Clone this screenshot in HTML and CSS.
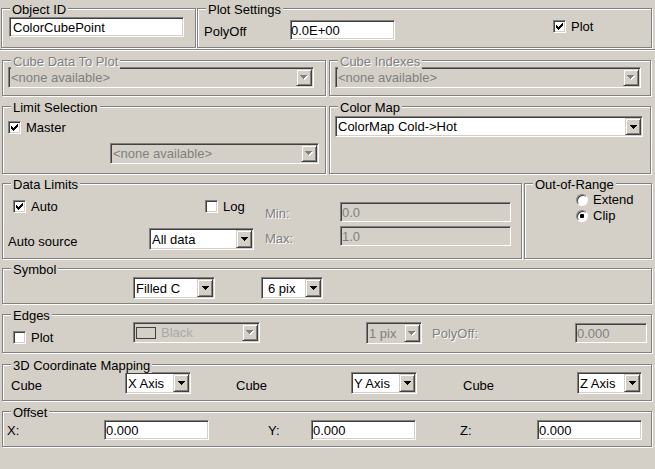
FILE: index.html
```html
<!DOCTYPE html>
<html>
<head>
<meta charset="utf-8">
<title>ColorCubePoint</title>
<link rel="stylesheet" href="styles.css">
</head>
<body>
<div class="dlg">

  <div class="row r1">
    <div class="grp g-oid">
      <span class="ttl">Object ID</span>
      <div class="fld f-oid">ColorCubePoint</div>
    </div>
    <div class="grp g-plot">
      <span class="ttl">Plot Settings</span>
      <span class="lbl l-polyoff">PolyOff</span>
      <div class="fld f-polyoff">0.0E+00</div>
      <div class="chk c-plot"><span class="box"><svg width="11" height="11" viewBox="0 0 11 11"><path d="M2 4H3V5H4V6H5V5H6V4H7V3H8V2H9V5H8V6H7V7H6V8H5V9H4V8H3V7H2Z"/></svg></span><span>Plot</span></div>
    </div>
  </div>

  <div class="sep"></div>

  <div class="row r2">
    <div class="grp g-cd">
      <span class="ttl dis">Cube Data To Plot</span>
      <div class="cmb dis w-cd"><span class="cv">&lt;none available&gt;</span><span class="cb"><svg width="8" height="5" viewBox="0 0 8 5"><path fill="#fff" d="M1 1H8V2H7V3H6V4H5V5H4V4H3V3H2V2H1Z"/><path fill="#808080" d="M0 0H7V1H6V2H5V3H4V4H3V3H2V2H1V1H0Z"/></svg></span></div>
    </div>
    <div class="grp g-ci">
      <span class="ttl dis">Cube Indexes</span>
      <div class="cmb dis w-cd"><span class="cv">&lt;none available&gt;</span><span class="cb"><svg width="8" height="5" viewBox="0 0 8 5"><path fill="#fff" d="M1 1H8V2H7V3H6V4H5V5H4V4H3V3H2V2H1Z"/><path fill="#808080" d="M0 0H7V1H6V2H5V3H4V4H3V3H2V2H1V1H0Z"/></svg></span></div>
    </div>
  </div>

  <div class="row r3">
    <div class="grp g-ls">
      <span class="ttl">Limit Selection</span>
      <div class="chk"><span class="box"><svg width="11" height="11" viewBox="0 0 11 11"><path d="M2 4H3V5H4V6H5V5H6V4H7V3H8V2H9V5H8V6H7V7H6V8H5V9H4V8H3V7H2Z"/></svg></span><span>Master</span></div>
      <div class="cmb dis w-ls"><span class="cv">&lt;none available&gt;</span><span class="cb"><svg width="8" height="5" viewBox="0 0 8 5"><path fill="#fff" d="M1 1H8V2H7V3H6V4H5V5H4V4H3V3H2V2H1Z"/><path fill="#808080" d="M0 0H7V1H6V2H5V3H4V4H3V3H2V2H1V1H0Z"/></svg></span></div>
    </div>
    <div class="grp g-cm">
      <span class="ttl">Color Map</span>
      <div class="cmb w-cm"><span class="cv">ColorMap Cold-&gt;Hot</span><span class="cb"><svg width="7" height="4" viewBox="0 0 7 4"><path d="M0 0H7V1H6V2H5V3H4V4H3V3H2V2H1V1H0Z"/></svg></span></div>
    </div>
  </div>

  <div class="row r4">
    <div class="grp g-dl">
      <span class="ttl">Data Limits</span>
      <div class="dl-a">
        <div class="chk c-auto"><span class="box"><svg width="11" height="11" viewBox="0 0 11 11"><path d="M2 4H3V5H4V6H5V5H6V4H7V3H8V2H9V5H8V6H7V7H6V8H5V9H4V8H3V7H2Z"/></svg></span><span>Auto</span></div>
        <div class="chk c-log"><span class="box"></span><span>Log</span></div>
        <span class="lbl dis l-min">Min:</span>
        <div class="fld dis f-min">0.0</div>
      </div>
      <div class="dl-b">
        <span class="lbl l-asrc">Auto source</span>
        <div class="cmb w-all"><span class="cv">All data</span><span class="cb"><svg width="7" height="4" viewBox="0 0 7 4"><path d="M0 0H7V1H6V2H5V3H4V4H3V3H2V2H1V1H0Z"/></svg></span></div>
        <span class="lbl dis l-max">Max:</span>
        <div class="fld dis f-max">1.0</div>
      </div>
    </div>
    <div class="grp g-oor">
      <span class="ttl">Out-of-Range</span>
      <div class="radrow"><span class="rad"></span><span>Extend</span></div>
      <div class="radrow"><span class="rad on"></span><span>Clip</span></div>
    </div>
  </div>

  <div class="row r5">
    <div class="grp g-full g-sym">
      <span class="ttl">Symbol</span>
      <div class="cmb w-filled"><span class="cv">Filled C</span><span class="cb"><svg width="7" height="4" viewBox="0 0 7 4"><path d="M0 0H7V1H6V2H5V3H4V4H3V3H2V2H1V1H0Z"/></svg></span></div>
      <div class="cmb w-6pix"><span class="cv">6 pix</span><span class="cb"><svg width="7" height="4" viewBox="0 0 7 4"><path d="M0 0H7V1H6V2H5V3H4V4H3V3H2V2H1V1H0Z"/></svg></span></div>
    </div>
  </div>

  <div class="row r6">
    <div class="grp g-full g-edg">
      <span class="ttl">Edges</span>
      <div class="chk c-eplot"><span class="box"></span><span>Plot</span></div>
      <div class="cmb dis w-black"><span class="cv"><span class="swatch"></span><span class="bl">Black</span></span><span class="cb"><svg width="8" height="5" viewBox="0 0 8 5"><path fill="#fff" d="M1 1H8V2H7V3H6V4H5V5H4V4H3V3H2V2H1Z"/><path fill="#808080" d="M0 0H7V1H6V2H5V3H4V4H3V3H2V2H1V1H0Z"/></svg></span></div>
      <div class="cmb dis w-1pix"><span class="cv">1 pix</span><span class="cb"><svg width="8" height="5" viewBox="0 0 8 5"><path fill="#fff" d="M1 1H8V2H7V3H6V4H5V5H4V4H3V3H2V2H1Z"/><path fill="#808080" d="M0 0H7V1H6V2H5V3H4V4H3V3H2V2H1V1H0Z"/></svg></span></div>
      <span class="lbl dis l-epoly">PolyOff:</span>
      <div class="fld dis f-epoly">0.000</div>
    </div>
  </div>

  <div class="row r7">
    <div class="grp g-full g-3d">
      <span class="ttl">3D Coordinate Mapping</span>
      <span class="lbl l-cube1">Cube</span>
      <div class="cmb w-axis"><span class="cv">X Axis</span><span class="cb"><svg width="7" height="4" viewBox="0 0 7 4"><path d="M0 0H7V1H6V2H5V3H4V4H3V3H2V2H1V1H0Z"/></svg></span></div>
      <span class="lbl l-cube2">Cube</span>
      <div class="cmb w-axis"><span class="cv">Y Axis</span><span class="cb"><svg width="7" height="4" viewBox="0 0 7 4"><path d="M0 0H7V1H6V2H5V3H4V4H3V3H2V2H1V1H0Z"/></svg></span></div>
      <span class="lbl l-cube3">Cube</span>
      <div class="cmb w-axisz"><span class="cv">Z Axis</span><span class="cb"><svg width="7" height="4" viewBox="0 0 7 4"><path d="M0 0H7V1H6V2H5V3H4V4H3V3H2V2H1V1H0Z"/></svg></span></div>
    </div>
  </div>

  <div class="row r8">
    <div class="grp g-full g-off">
      <span class="ttl">Offset</span>
      <span class="lbl l-x">X:</span>
      <div class="fld f-off">0.000</div>
      <span class="lbl l-y">Y:</span>
      <div class="fld f-off">0.000</div>
      <span class="lbl l-z">Z:</span>
      <div class="fld f-off">0.000</div>
    </div>
  </div>

</div>
</body>
</html>
```

FILE: styles.css
```css
* { box-sizing: border-box; }
html, body { margin: 0; padding: 0; }
body {
  width: 655px;
  height: 469px;
  overflow: hidden;
  background: #d4d0c8;
  color: #000;
  font: 13px "Liberation Sans", Arial, sans-serif;
}

.dlg { display: flex; flex-direction: column; padding-top: 8px; }
.row { display: flex; flex: none; }
.sep {
  flex: none;
  height: 2px;
  margin-top: 1px;
  border-top: 1px solid #808080;
  border-bottom: 1px solid #fff;
}
.r2 { margin-top: 9px; }
.r3 { margin-top: 10px; }
.r4 { margin-top: 9px; }
.r5 { margin-top: 9px; }
.r6 { margin-top: 10px; }
.r7 { margin-top: 11px; }
.r8 { margin-top: 10px; }

/* etched group box */
.grp {
  position: relative;
  display: flex;
  align-items: flex-start;
  flex: none;
  border: 1px solid #808080;
  box-shadow: inset 1px 1px #fff, 1px 1px #fff;
}
.ttl {
  position: absolute;
  top: -7px;
  left: 8px;
  padding: 0 2px;
  background: #d4d0c8;
  line-height: 15px;
  white-space: nowrap;
}
.dis { color: #808080; text-shadow: 1px 1px #fff; }

.lbl { line-height: 15px; white-space: nowrap; flex: none; }

/* sunken edit field */
.fld {
  display: flex;
  align-items: center;
  flex: none;
  height: 20px;
  padding: 0 0 0 1px;
  background: #fff;
  border: 1px solid;
  border-color: #808080 #fff #fff #808080;
  box-shadow: inset 1px 1px #404040, inset -1px -1px #d4d0c8;
  white-space: nowrap;
  overflow: hidden;
}
.fld.dis { background: #d4d0c8; text-shadow: none; }

/* combo box */
.cmb {
  display: flex;
  flex: none;
  height: 21px;
  background: #fff;
  border: 1px solid;
  border-color: #808080 #fff #fff #808080;
  box-shadow: inset 1px 1px #404040, inset -1px -1px #d4d0c8;
  overflow: hidden;
}
.cmb.dis { background: #d4d0c8; text-shadow: none; }
.cv {
  flex: 1;
  display: flex;
  align-items: center;
  padding-left: 2px;
  white-space: nowrap;
  overflow: hidden;
}
.cb {
  flex: none;
  width: 16px;
  margin: 1px;
  display: flex;
  align-items: center;
  justify-content: center;
  background: #d4d0c8;
  border: 1px solid;
  border-color: #d4d0c8 #404040 #404040 #d4d0c8;
  box-shadow: inset 1px 1px #fff, inset -1px -1px #808080;
}
.cb svg { display: block; }

/* checkbox */
.chk {
  display: flex;
  align-items: flex-start;
  gap: 5px;
  height: 13px;
  line-height: 13px;
  white-space: nowrap;
  flex: none;
}
.box {
  flex: none;
  width: 13px;
  height: 13px;
  background: #fff;
  border: 1px solid;
  border-color: #808080 #fff #fff #808080;
  box-shadow: inset 1px 1px #404040, inset -1px -1px #d4d0c8;
}
.box svg { display: block; }

/* radio */
.radrow {
  display: flex;
  align-items: center;
  gap: 5px;
  height: 13px;
  line-height: 13px;
  white-space: nowrap;
}
.rad {
  position: relative;
  flex: none;
  width: 12px;
  height: 12px;
  border-radius: 50%;
  background: #fff;
  border: 1px solid;
  border-color: #808080 #fff #fff #808080;
  box-shadow: inset 1px 1px #404040;
}
.rad.on::after {
  content: "";
  position: absolute;
  left: 3px;
  top: 3px;
  width: 4px;
  height: 4px;
  border-radius: 1px;
  background: #000;
}

/* row 1 */
.g-oid { margin-left: 1px; width: 195px; height: 40px; padding: 8px 0 0 7px; }
.f-oid { width: 175px; padding-left: 3px; }
.g-plot { margin-left: 1px; width: 455px; height: 40px; padding: 11px 0 0 6px; }
.l-polyoff { width: 86px; margin-top: 4px; }
.f-polyoff { width: 105px; padding-left: 0; }
.c-plot { margin-left: 158px; }

/* row 2 */
.g-cd { margin-left: 2px; width: 324px; height: 36px; padding: 6px 0 0 5px; }
.g-ci { margin-left: 3px; width: 322px; height: 36px; padding: 6px 0 0 5px; }
.w-cd { width: 306px; }

/* row 3 */
.g-ls { margin-left: 2px; width: 324px; height: 68px; padding: 14px 0 0 5px; flex-direction: column; }
.w-ls { width: 209px; margin: 9px 0 0 102px; }
.g-cm { margin-left: 3px; width: 322px; height: 68px; padding: 9px 0 0 5px; }
.w-cm { width: 308px; }

/* row 4 */
.g-dl { margin-left: 2px; width: 520px; height: 76px; padding: 16px 0 0 5px; flex-direction: column; }
.dl-a { display: flex; align-items: flex-start; height: 26px; }
.dl-b { display: flex; align-items: flex-start; }
.c-auto { margin-left: 5px; width: 192px; }
.c-log { width: 60px; }
.l-min { width: 75px; margin-top: 6px; }
.f-min { width: 171px; margin-top: 2px; }
.l-asrc { width: 141px; margin-top: 8px; }
.w-all { width: 105px; height: 22px; margin-top: 2px; }
.l-max { width: 75px; margin: 5px 0 0 11px; }
.f-max { width: 171px; }
.g-oor { margin-left: 2px; width: 128px; height: 76px; padding: 9px 0 0 51px; flex-direction: column; gap: 3px; }

/* full-width rows */
.g-full { margin-left: 2px; width: 650px; }

.g-sym { height: 36px; padding: 8px 0 0 130px; }
.w-filled { width: 82px; height: 22px; }
.w-6pix { width: 62px; height: 22px; margin-left: 46px; }
.w-6pix .cv { padding-left: 6px; }

.g-edg { height: 39px; padding: 7px 0 0 10px; }
.c-eplot { width: 120px; margin-top: 9px; }
.w-black { width: 127px; }
.swatch {
  flex: none;
  width: 20px;
  height: 12px;
  margin-right: 5px;
  border: 1px solid #404040;
  background: #d4d0c8;
}
.bl { color: #a8a8a8; }
.w-1pix { width: 56px; height: 22px; margin-left: 106px; }
.l-epoly { width: 143px; margin: 4px 0 0 10px; }
.f-epoly { width: 72px; margin-top: 1px; }

.g-3d { height: 37px; padding: 7px 0 0 8px; }
.l-cube1 { width: 114px; margin-top: 6px; }
.l-cube2 { width: 160px; margin-top: 6px; padding-left: 45px; }
.l-cube3 { width: 160px; margin-top: 6px; padding-left: 46px; }
.w-axis { width: 66px; height: 22px; }
.w-axisz { width: 65px; height: 22px; }

.g-off { height: 36px; padding: 8px 0 0 4px; }
.f-off { width: 105px; }
.l-x { width: 97px; margin-top: 3px; }
.l-y { width: 43px; margin: 3px 0 0 59px; }
.l-z { width: 77px; margin: 3px 0 0 44px; }
```
